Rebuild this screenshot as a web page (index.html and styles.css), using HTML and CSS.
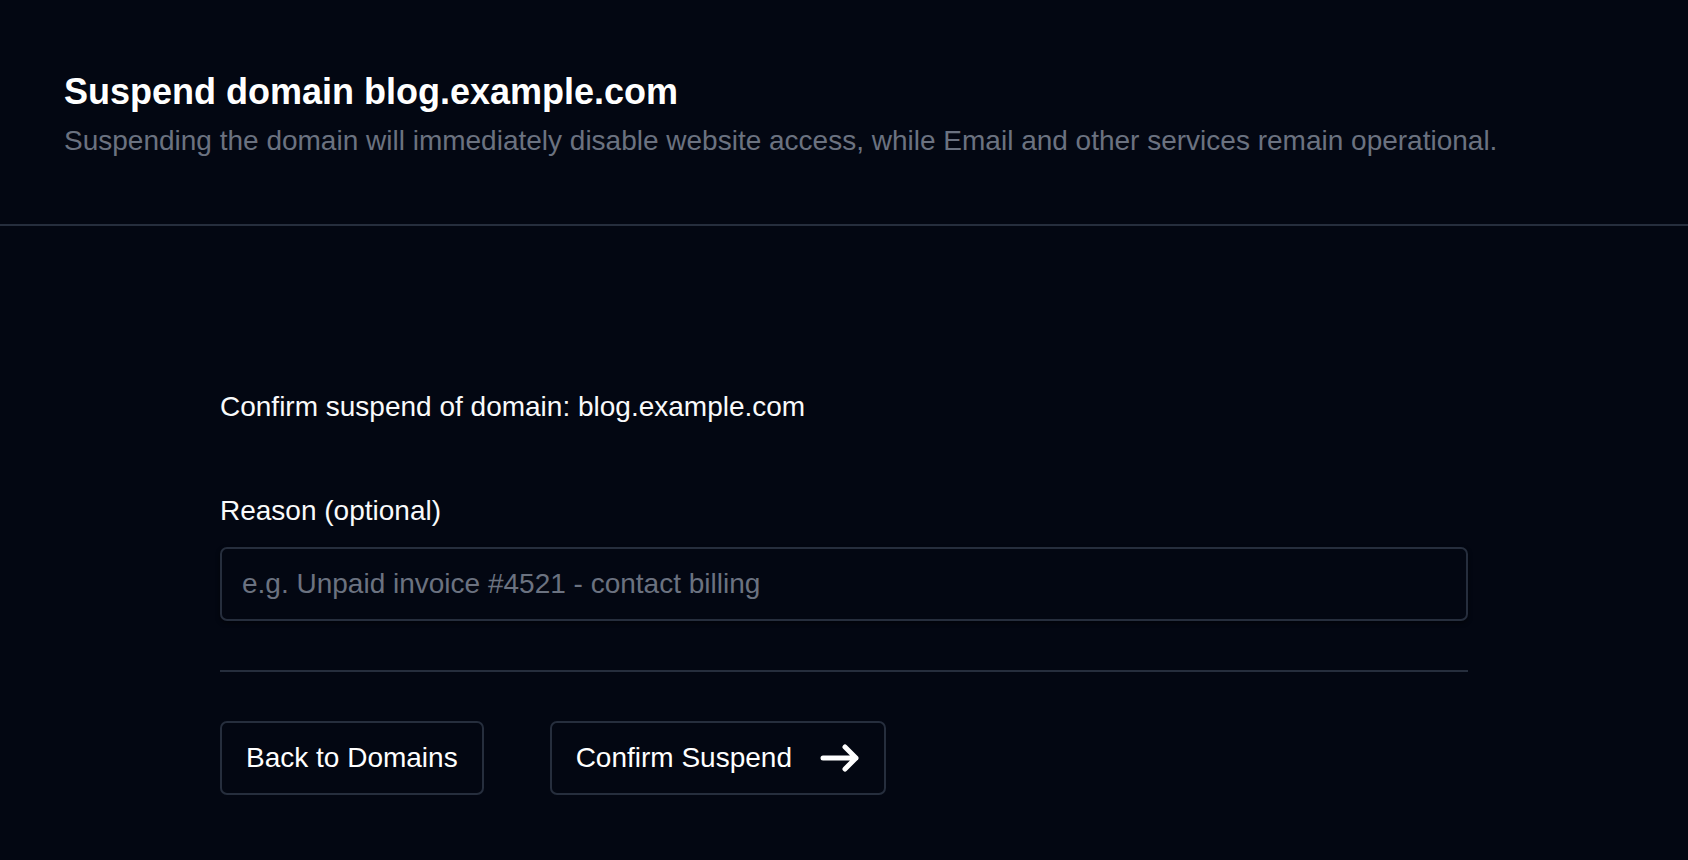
FILE: index.html
```html
<!DOCTYPE html>
<html lang="en">
<head>
    <meta charset="UTF-8">
    <meta name="viewport" content="width=device-width, initial-scale=1.0">
    <title>Suspend domain</title>
    <link rel="stylesheet" href="styles.css">
</head>
<body>
    <header class="page-header">
        <h1 class="title">Suspend domain blog.example.com</h1>
        <p class="subtitle">Suspending the domain will immediately disable website access, while Email and other services remain operational.</p>
    </header>

    <main class="content">
        <form class="suspend-form">
            <p class="confirm-text">Confirm suspend of domain: blog.example.com</p>

            <label class="field-label" for="reason">Reason (optional)</label>
            <input class="field-input" id="reason" type="text" placeholder="e.g. Unpaid invoice #4521 - contact billing">

            <hr class="divider">

            <div class="actions">
                <a class="btn" href="#">Back to Domains</a>
                <button class="btn" type="submit">
                    Confirm Suspend
                    <svg class="btn-icon" width="40" height="28" viewBox="0 0 40 28" fill="none" stroke="currentColor" stroke-width="5" stroke-linecap="round" stroke-linejoin="round">
                        <path d="M3 14H36M25 3L36 14L25 25"/>
                    </svg>
                </button>
            </div>
        </form>
    </main>
</body>
</html>
```

FILE: styles.css
```css
body {
    margin: 0;
    padding: 0;
    background: #030712;
    color: #ffffff;
    font-family: 'Liberation Sans', Arial, sans-serif;
    min-height: 100vh;
}

.page-header {
    padding: 70px 64px 63px;
    border-bottom: 2px solid #262e3d;
}

.title {
    margin: 0;
    font-size: 36px;
    line-height: 44px;
    font-weight: bold;
}

.subtitle {
    margin: 7px 0 0;
    font-size: 28px;
    line-height: 40px;
    color: #6b7280;
}

.content {
    padding-top: 161px;
}

.suspend-form {
    max-width: 1248px;
    margin: 0 auto;
}

.confirm-text {
    margin: 0;
    font-size: 28px;
    line-height: 40px;
    color: #f9fafb;
}

.field-label {
    display: block;
    margin-top: 64px;
    font-size: 28px;
    line-height: 40px;
    color: #f9fafb;
}

.field-input {
    display: block;
    box-sizing: border-box;
    width: 100%;
    height: 74px;
    margin-top: 16px;
    padding: 0 20px;
    font-family: inherit;
    font-size: 28px;
    color: #ffffff;
    background: #030712;
    border: 2px solid #262e3d;
    border-radius: 7px;
    box-shadow: 0 2px 4px rgba(0, 0, 0, 0.5);
    outline: none;
}

.field-input::placeholder {
    color: #6b7280;
}

.divider {
    margin: 49px 0 0;
    height: 2px;
    border: 0;
    background: #262e3d;
}

.actions {
    display: flex;
    gap: 66px;
    margin-top: 49px;
}

.btn {
    display: flex;
    align-items: center;
    gap: 28px;
    box-sizing: border-box;
    height: 74px;
    padding: 0 24px;
    font-family: inherit;
    font-size: 28px;
    color: #ffffff;
    text-decoration: none;
    background: transparent;
    border: 2px solid #262e3d;
    border-radius: 7px;
    cursor: pointer;
}

.btn-icon {
    display: block;
    flex-shrink: 0;
}
```
